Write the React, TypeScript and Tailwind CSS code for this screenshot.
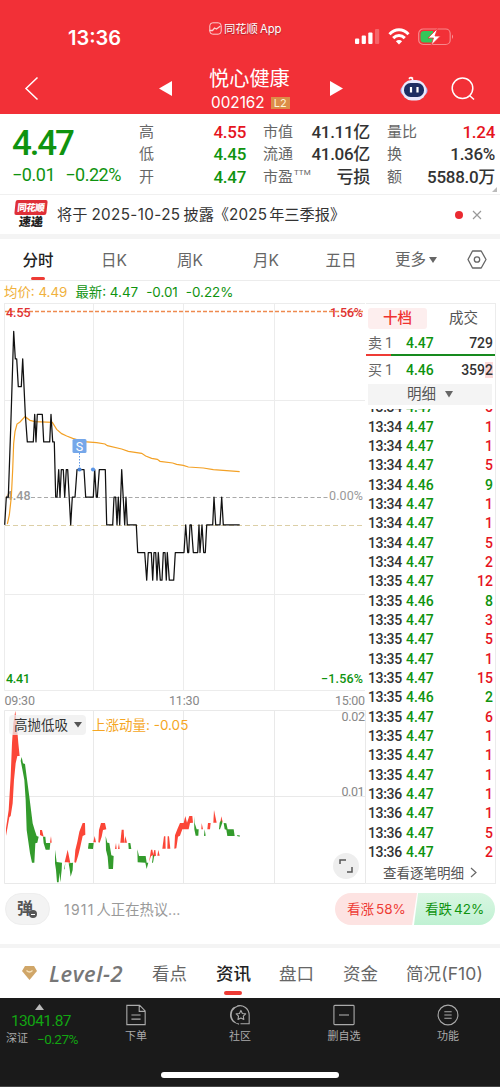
import React from "react";

const num = "font-['Roboto','Noto_Sans_CJK_SC',sans-serif]";
const inter = "font-['Inter','Noto_Sans_CJK_SC',sans-serif]";

/* ---------- price series: [x, price in cents above 4.00] ---------- */
const price: [number, number][] = [
  [14, 47], [19, 48], [25, 48], [32, 50.5], [36, 52], [41, 54], [46, 53], [50, 53], [55, 52], [64, 52], [68, 53], [76, 51], [82, 50],
  [100, 50], [104, 51], [108, 50], [112, 51], [127, 51], [131, 50], [149, 50], [153, 51], [158, 50], [163, 50], [167, 48],
  [171, 48], [176, 49], [180, 48], [184, 49], [190, 49], [194, 48], [199, 49], [203, 49], [212, 47], [217, 48], [225, 48],
  [231, 49], [252, 49], [257, 48], [280, 48], [284, 49], [289, 48], [292, 48], [298, 49], [316, 49], [320, 47], [338, 47],
  [342, 48], [347, 48], [351, 47], [355, 48], [359, 47], [365, 49], [374, 47], [378, 48], [382, 47], [409, 47], [413, 46],
  [434, 46], [440, 45], [445, 46], [454, 46], [458, 45], [462, 46], [467, 46], [471, 45], [475, 46], [481, 45], [486, 45],
  [490, 46], [495, 46], [499, 45], [502, 46], [508, 45], [521, 45], [526, 46], [552, 46], [557, 47], [563, 46], [566, 46],
  [570, 47], [574, 47], [580, 46], [593, 46], [597, 47], [600, 46], [606, 47], [611, 46], [616, 46], [620, 47], [638, 47],
  [642, 48], [647, 47], [660, 47], [665, 48], [670, 47], [719, 47],
];
const pricePoints = price.map(([x, p]) => `${(x / 3).toFixed(1)},${(497.2 - (p - 48) * 27.65).toFixed(1)}`).join(" ");

const average =
  "22,672 28,645 34,590 38,510 41,430 45,395 51,372 60,366 75,350 90,361 105,365 157,367 170,388 185,401 200,408 218,415 250,425 290,428 315,432 322,437 365,447 385,454 425,460 437,468 455,475 472,478 480,484 518,489 530,493 550,496 565,501 610,504 640,509 719,515";

/* ---------- momentum bands ---------- */
const red = [
  "18,408 18,385 26,330 32,230 36,130 40,70 46,32 51,80 55,130 59,168 52,168 47,190 42,240 38,310 32,348 28,352",
  "120,390 126,390 131,410 120,405", "150,428 153,408 155,428",
  "194,487 203,449 211,489 202,487",
  "223,487 226,450 232,425 238,395 248,369 255,369 256,404 248,408 240,445 235,465 228,488",
  "280,427 284,408 288,427",
  "295,427 297,390 303,369 315,369 319,388 309,390 305,410 299,428",
  "345,447 348,429 350,447", "354,447 357,429 359,447", "361,428 365,389 371,389 373,428", "373,428 376,408 381,428",
  "447,487 453,449 457,449 460,466 453,468", "458,470 463,450 466,450 468,467", "472,467 475,450 479,467",
  "487,446 492,409 496,409 497,446", "502,446 503,409 507,409 511,446",
  "523,446 525,406 532,388 540,369 551,369 556,348 561,368 568,348 577,348 579,368 570,369 566,388 547,388 540,407 534,410 529,445",
  "604,388 605,369 609,388", "622,388 624,369 632,369 630,388", "640,368 642,330 650,368", "661,368 664,349 668,366",
];
const green = [
  "62,182 65,171 69,190 75,192 80,230 88,290 98,370 104,390 110,408 116,410 112,428 106,430 103,488 96,488 90,460 80,390 77,300 73,240 67,208",
  "129,410 136,410 138,429 151,429 149,449 137,449 131,430",
  "165,449 170,486 186,488 185,510 181,547 178,518 176,547 171,547 168,510 165,490",
  "192,508 196,488 194,508", "206,490 219,488 218,510 212,530 209,508",
  "264,446 266,429 281,429 279,447",
  "317,408 322,428 328,429 334,466 341,468 339,507 326,507 323,470 318,450",
  "385,429 391,429 394,447 386,447",
  "412,448 417,468 437,468 440,488 445,488 440,507 436,488 413,487", "456,488 459,465 463,466 459,488",
  "582,349 584,369 590,388 596,388 595,407 587,407 583,388", "612,408 614,388 617,407",
  "657,388 659,368 664,360 667,368 660,388", "671,369 679,370 683,388 701,388 704,408 682,408 679,389 674,388",
  "711,406 719,406 719,410 711,408",
];

function PriceChart() {
  return (
    <svg className="block" width="362" height="406" viewBox="4 303 362 406" fontFamily="Roboto, sans-serif" fontWeight="500">
      <g stroke="#ececec" fill="none">
        <path d="M4.5 303V690.5H365M4.5 303.5H365M4 400.5H365M4 594.5H365M93.500 303V690M183.500 303V690M274.500 303V690" />
      </g>
      <path d="M5 311.600H363" stroke="#ee8a4f" strokeWidth="1.500" strokeDasharray="4 2" />
      <path d="M31 497.500H330" stroke="#a9a9a9" strokeDasharray="4 2.500" />
      <path d="M5 525.500H365" stroke="#dccfa6" strokeDasharray="5 3" />
      <text x="5.500" y="500" fontSize="12.500" fill="#999" textLength="25">4.48</text>
      <polyline transform="translate(0 300) scale(.33333)" points={average} fill="none" stroke="#f3a126" strokeWidth="3.600" />
      <polyline points={pricePoints} fill="none" stroke="#111" strokeWidth="1.250" strokeLinejoin="round" />
      <path d="M79.500 453V469" stroke="#5f9bea" strokeDasharray="1.500 1.500" />
      <circle cx="79.500" cy="469.500" r="2.100" fill="#4d86d6" />
      <circle cx="93" cy="469.500" r="2.100" fill="#5c96e6" />
      <rect x="72.500" y="439" width="14" height="14" rx="1.500" fill="#75a7e9" />
      <text x="79.500" y="450.500" fontSize="12.500" fontWeight="400" fill="#fff" textAnchor="middle">S</text>
      <g fontSize="12.500">
        <text x="6" y="316.500" fill="#e03232" textLength="24.500">4.55</text>
        <text x="330" y="316.500" fill="#e03232" textLength="33">1.56%</text>
        <text x="329" y="499.500" fill="#999" fontWeight="400" textLength="34">0.00%</text>
        <text x="6" y="683.300" fill="#0f930f" textLength="24">4.41</text>
        <text x="321" y="683.300" fill="#0f930f" textLength="42">−1.56%</text>
      </g>
      <g fontSize="12.500" fontWeight="400" fill="#888">
        <text x="4.500" y="705" textLength="30.500">09:30</text>
        <text x="169" y="705" textLength="30.500">11:30</text>
        <text x="335" y="705" textLength="30">15:00</text>
      </g>
    </svg>
  );
}

function MomentumChart() {
  return (
    <div className="relative h-[175px]">
      <svg className="block" width="362" height="175" viewBox="4 709 362 175" fontFamily="Roboto, sans-serif">
        <path d="M4.500 710.500H365.500V883.500H4.500ZM4 796.500H365M93.500 710V883M183.500 710V883M274.500 710V883" fill="none" stroke="#e9e9e9" />
        <g transform="translate(0 700) scale(.33333)">
          {red.map((p) => <polygon key={p} points={p} fill="#fb4637" />)}
          {green.map((p) => <polygon key={p} points={p} fill="#339b2c" />)}
        </g>
        <g fontSize="12.500" fill="#888">
          <text x="341.500" y="721" textLength="23.500">0.02</text>
          <text x="341.500" y="796" textLength="23">0.01</text>
        </g>
      </svg>
      <div className="absolute left-[5px] top-[6px] flex h-[20px] items-center">
        <div className={`flex h-[20px] w-[77px] items-center justify-between rounded-sm bg-[#eeeeee]/75 pl-[5px] pr-[4px] text-[13.500px] leading-[20px] text-[#333] whitespace-nowrap ${inter}`}>
          高抛低吸
          <svg width="8" height="6" viewBox="0 0 8 6"><path d="M0 0h8L4 5.500z" fill="#555" /></svg>
        </div>
        <span className={`ml-[6px] text-[13.500px] leading-[20px] tracking-[0px] text-[#f5a623] whitespace-nowrap ${inter}`}>上涨动量: -0.05</span>
      </div>
      <div className="absolute left-[329px] top-[144px] flex size-[26px] items-center justify-center rounded-full bg-[#eeeeee]">
        <svg width="16" height="16" viewBox="0 0 16 16" fill="none" stroke="#555" strokeWidth="1.500"><path d="M2 6V2h6M9 14h5V9" /></svg>
      </div>
    </div>
  );
}

const trades: [string, string, number][] = [
  ["13:34", "4.47", 5], ["13:34", "4.47", 1], ["13:34", "4.47", 1], ["13:34", "4.47", 5], ["13:34", "4.46", 9], ["13:34", "4.47", 1],
  ["13:34", "4.47", 1], ["13:34", "4.47", 5], ["13:34", "4.47", 2], ["13:35", "4.47", 12], ["13:35", "4.46", 8], ["13:35", "4.47", 3],
  ["13:35", "4.47", 5], ["13:35", "4.47", 1], ["13:35", "4.47", 15], ["13:35", "4.46", 2], ["13:35", "4.47", 6], ["13:35", "4.47", 1],
  ["13:35", "4.47", 1], ["13:35", "4.47", 1], ["13:36", "4.47", 1], ["13:36", "4.47", 1], ["13:36", "4.47", 5], ["13:36", "4.47", 2],
];

function OrderPanel() {
  return (
    <div className={`flex w-[130px] flex-col border-b border-r border-t border-[#ececec] ${num}`}>
      <div className="flex h-[27px] pl-[2px] pt-[4px] text-[14.500px] leading-[22px]">
        <div className="h-[21px] w-[59px] rounded-[3px] bg-[#fdeeee] text-center font-medium text-[#f0322f]">十档</div>
        <div className="ml-[22px] text-[#555]">成交</div>
      </div>
      <div className="flex h-[23px] items-center text-[14px] leading-[20px]">
        <span className="w-[38px] pl-[2px] text-[#666]">卖<span className="ml-[3px]">1</span></span>
        <span className="flex-1 pl-[2px] font-medium text-[#0f930f]">4.47</span>
        <span className="pr-[2px] font-medium text-[#333]">729</span>
      </div>
      <div className="flex h-[2px]"><div className="w-[25px] bg-[#ee3b35]" /><div className="flex-1 bg-[#168a1e]" /></div>
      <div className="flex h-[28px] items-center text-[14px] leading-[20px]">
        <span className="w-[38px] pl-[2px] text-[#666]">买<span className="ml-[3px]">1</span></span>
        <span className="flex-1 pl-[2px] font-medium text-[#0f930f]">4.46</span>
        <span className="pr-[2px] font-medium text-[#333]">359<span className="bg-[#fbd9d9]">2</span></span>
      </div>
      <div className="ml-[2px] mr-[3px] flex h-[21px] items-center justify-center gap-[9px] bg-[#f4f4f4] text-[14.500px] leading-[21px] text-[#555]">
        明细<svg width="8" height="7" viewBox="0 0 8 7"><path d="M0 0h8L4 6.500z" fill="#666" /></svg>
      </div>
      <div className="mt-[4px] flex h-[453px] flex-col justify-end overflow-hidden text-[14px] font-medium">
        {trades.map(([t, p, v], i) => (
          <div key={i} className="flex h-[19.340px] shrink-0 items-center leading-[19px]">
            <span className="w-[40px] pl-[2px] tracking-[-0.350px] text-[#333]">{t}</span>
            <span className="flex-1 text-[#0f930f]">{p}</span>
            <span className={p === "4.46" ? "pr-[2px] text-[#0f930f]" : "pr-[2px] text-[#e6141e]"}>{v}</span>
          </div>
        ))}
      </div>
      <div className="flex h-[21px] items-center pl-[17px] text-[13.500px] leading-[20px] text-[#555] whitespace-nowrap">
        查看逐笔明细
        <svg className="ml-[6px]" width="7" height="11" viewBox="0 0 7 11" fill="none" stroke="#666" strokeWidth="1.200"><path d="M1 1l5 4.500L1 10" /></svg>
      </div>
    </div>
  );
}

function Header() {
  return (
    <header className={`h-[114px] bg-[#f23037] text-white ${inter}`}>
      <div className="flex h-[64px]">
        <div className="w-[209px] pl-[68px] pt-[27px] text-[20px] font-semibold leading-[23px] tracking-[0px]">13:36</div>
        <svg className="mt-[22px]" width="13" height="13" viewBox="0 0 13 13" fill="none" stroke="#fbd0d2" strokeWidth="1"><rect x="0.800" y="0.800" width="11.400" height="11.400" rx="3" /><path d="M0.500 8.500h3l2-2.500 2 1 4-3" strokeWidth="1.300" /></svg>
        <div className="ml-[2px] w-[131px] pt-[21px] text-[11.300px] leading-[17px] [text-shadow:0_1px_1px_#a0222a]">同花顺<span className="ml-[2px]">App</span></div>
        <svg className="mt-[28px]" width="25" height="17" viewBox="355 28 25 17" fill="#fff"><rect x="355" y="38.500" width="4.200" height="5.500" rx="1" /><rect x="361.700" y="35.500" width="4.200" height="8.500" rx="1" /><rect x="368.300" y="32.500" width="4.200" height="11.500" rx="1" /><rect x="375" y="29" width="4.200" height="15" rx="1" opacity=".25" /></svg>
        <svg className="ml-[8px] mt-[28px]" width="22" height="17" viewBox="0 0 22 17" fill="none" stroke="#fff" strokeWidth="3"><path d="M1.500 6.200C7 .4 15 .4 20.500 6.200" /><path d="M5.200 10.100c3.500-3.500 8.100-3.500 11.600 0" /><path d="M11 16.500L7.900 13.200c1.800-1.700 4.400-1.700 6.200 0z" fill="#fff" stroke="none" /></svg>
        <svg className="ml-[8px] mt-[28px]" width="37" height="18" viewBox="0 0 37 18"><rect x=".7" y="1" width="31.500" height="15.500" rx="4.500" fill="none" stroke="#fff" strokeOpacity=".42" strokeWidth="1.200" /><path d="M6 3h9v11.500H6a3.500 3.500 0 0 1-3.500-3.500V6.500A3.500 3.500 0 0 1 6 3z" fill="#34c759" /><path d="M34 6.500q2 2.200 0 4.500z" fill="#fff" opacity=".5" /><path d="M19.500.5L10 10h5.500L13 17.500 22.500 8H17z" fill="#fff" stroke="#f23037" strokeWidth=".8" /></svg>
      </div>
      <div className="flex h-[50px]">
        <svg className="ml-[24px] mt-[12px]" width="15" height="25" viewBox="0 0 15 25" fill="none" stroke="#fff" strokeWidth="1.500"><path d="M13.500 1.500L2 12.500l11.500 11" /></svg>
        <svg className="ml-[120px] mt-[17px]" width="13" height="15" viewBox="0 0 13 15"><path d="M13 0v15L0 7.500z" fill="#fff" /></svg>
        <div className="ml-[37px] w-[121px] whitespace-nowrap">
          <div className="h-[27px] pt-[1px] text-[20.200px] leading-[27px]">悦心健康</div>
          <div className="flex h-[23px] items-center pl-[2px] text-[15.300px] leading-[20px]">002162<span className="ml-[6px] flex h-[12px] w-[19px] items-center justify-center bg-[#dc8d48] text-[11px] leading-[12px] text-[#fff3d6]">L2</span></div>
        </div>
        <svg className="mt-[17px]" width="13" height="15" viewBox="0 0 13 15"><path d="M0 0v15l13-7.500z" fill="#fff" /></svg>
        <svg className="ml-[57px] mt-[11px]" width="28" height="27" viewBox="0 0 28 27">
          <path d="M9 4q3-3 4 2M9 3.500q2-2 4 0" stroke="#fff" strokeWidth="1.500" fill="none" />
          <rect x=".5" y="10.500" width="27" height="10" rx="5" fill="#b5b4f2" />
          <rect x="1.700" y="5" width="24.600" height="20.500" rx="10" fill="#e9e9fd" />
          <rect x="4" y="8" width="20" height="14" rx="6.500" fill="#1e2d62" />
          <path d="M11 12v5.500M17.500 12v5.500" stroke="#fff" strokeWidth="2.200" />
        </svg>
        <svg className="ml-[22px] mt-[12px]" width="26" height="25" viewBox="0 0 26 25" fill="none" stroke="#fff" strokeWidth="1.500"><circle cx="12.500" cy="12.300" r="10.300" /><path d="M19.500 19.500l4.500 4" /></svg>
      </div>
    </header>
  );
}

function Stat({ label, value, color, sup }: { label: string; value: string; color: string; sup?: boolean }) {
  return (
    <div className="flex h-[22.500px] items-center justify-between whitespace-nowrap leading-[22px]">
      <span className="text-[15px] text-[#666]">{label}{sup && <sup className="-top-[7px] ml-[1px] text-[8px] leading-[0]">TTM</sup>}</span>
      <span className={`text-[17px] font-medium tracking-[-0.300px] ${color}`}>{value}</span>
    </div>
  );
}

function Quote() {
  return (
    <section className={`flex h-[80px] pt-[6.500px] ${num}`}>
      <div className="w-[139px] pl-[12px] text-[#0f930f] whitespace-nowrap">
        <div className="h-[43.500px] text-[35px] font-medium leading-[45px] tracking-[-2.200px]">4.47</div>
        <div className="flex gap-[10px] text-[18px] leading-[21px] tracking-[-0.450px]"><span>−0.01</span><span>−0.22%</span></div>
      </div>
      <div className="w-[107px]">
        <Stat label="高" value="4.55" color="text-[#e6141e]" />
        <Stat label="低" value="4.45" color="text-[#0f930f]" />
        <Stat label="开" value="4.47" color="text-[#0f930f]" />
      </div>
      <div className="ml-[17px] w-[107px]">
        <Stat label="市值" value="41.11亿" color="text-[#333]" />
        <Stat label="流通" value="41.06亿" color="text-[#333]" />
        <Stat label="市盈" value="亏损" color="text-[#333]" sup />
      </div>
      <div className="ml-[17px] w-[108px]">
        <Stat label="量比" value="1.24" color="text-[#e6141e]" />
        <Stat label="换" value="1.36%" color="text-[#333]" />
        <Stat label="额" value="5588.0万" color="text-[#333]" />
      </div>
      <svg className="-ml-[3px] mt-[66px]" width="5" height="5" viewBox="0 0 5 5"><path d="M5 0v5H0z" fill="#bbb" /></svg>
    </section>
  );
}

function News() {
  return (
    <section className={`flex h-[40px] items-center border-t border-[#f0f0f0] ${inter}`}>
      <div className="ml-[14px] flex h-[29px] w-[34px] flex-col items-center whitespace-nowrap">
        <div className="flex h-[15px] w-[32px] -skew-x-6 items-center justify-center rounded-[2px] bg-[#df3038] text-[9.500px] font-black leading-[14px] tracking-[-0.500px] text-white">同花顺</div>
        <div className="h-[14px] -skew-x-6 text-[12px] font-black leading-[14px] text-[#222]">速递</div>
      </div>
      <div className="ml-[9px] text-[15.200px] leading-[22px] text-[#333] whitespace-nowrap">将于<span className="ml-[4px] mr-[3px] tracking-[0.400px]">2025-10-25</span>披露《<span className="tracking-[0.200px]">2025</span><span className="ml-[2px]">年三季报》</span></div>
      <div className="ml-auto size-[8px] rounded-full bg-[#ea2a31]" />
      <svg className="ml-[9px] mr-[18px]" width="10" height="10" viewBox="0 0 10 10" stroke="#999" strokeWidth="1.200"><path d="M1 1l8 8M9 1L1 9" /></svg>
    </section>
  );
}

function Periods() {
  return (
    <nav className={`flex h-[42px] border-b border-[#ececec] text-[15.500px] leading-[43px] text-[#666] whitespace-nowrap ${inter}`}>
      <div className="flex w-[76px] flex-col items-center font-medium text-[#222]"><span className="h-[38px]">分时</span><span className="h-[3px] w-[14px] rounded-full bg-[#ee3b35]" /></div>
      <div className="w-[76px] text-center">日K</div>
      <div className="w-[76px] text-center">周K</div>
      <div className="w-[76px] text-center">月K</div>
      <div className="w-[74px] text-center">五日</div>
      <div className="ml-[17px] flex w-[72px] items-center">更多<svg className="ml-[3px]" width="8" height="6" viewBox="0 0 8 6"><path d="M0 0h8L4 6z" fill="#666" /></svg></div>
      <svg className="mt-[11px]" width="20" height="19" viewBox="0 0 20 19" fill="none" stroke="#666" strokeWidth="1.300"><path d="M5.500 1h8.700L19 9.500 14.200 18H5.500L1 9.500z" strokeLinejoin="round" /><circle cx="10" cy="9.500" r="2.700" /></svg>
    </nav>
  );
}

function Discussion() {
  return (
    <section className={`flex h-[60px] pl-[5px] pr-[5px] pt-[9px] text-[14px] leading-[33px] whitespace-nowrap ${inter}`}>
      <div className="relative h-[32px] w-[45px] rounded-full border border-[#eeeeee] bg-[#f3f3f3] pl-[11px] text-[16px] font-bold leading-[29px] text-[#555]">
        弹
        <div className="absolute left-[23px] top-[16px] flex size-[8px] items-center justify-center rounded-full bg-[#555]"><span className="h-px w-[4px] bg-white" /></div>
      </div>
      <div className="ml-[14px] text-[#999]"><span className="tracking-[1.200px]">1911</span><span className="ml-[2px] text-[14.300px]">人正在热议...</span></div>
      <div className="ml-auto h-[32px] w-[82px] rounded-l-full bg-[#fde3e2] pl-[12px] text-[13.500px] text-[#ee3b35] [clip-path:polygon(0_0,100%_0,94%_100%,0_100%)]">看涨<span className="ml-[2px]">58%</span></div>
      <div className="-ml-[3px] h-[32px] w-[81px] rounded-r-full bg-gradient-to-b from-[#d9f6e2] to-[#c0f1d3] pl-[11px] text-[13.500px] text-[#0f930f] [clip-path:polygon(5%_0,100%_0,100%_100%,0_100%)]">看跌<span className="ml-[2px]">42%</span></div>
    </section>
  );
}

function InfoTabs() {
  return (
    <nav className={`flex h-[50px] text-[17.500px] leading-[51px] text-[#666] whitespace-nowrap ${inter}`}>
      <svg className="ml-[22px] mt-[18px]" width="15" height="14" viewBox="0 0 15 14"><path d="M3 0h9l3 5-7.500 9L0 5z" fill="#d0a668" /><path d="M4.500 4.500q3 3 6 0" fill="none" stroke="#f7e3bd" strokeWidth="1.200" /></svg>
      <div className="ml-[12px] w-[103px] font-['Open_Sans',sans-serif] text-[22px] font-semibold italic tracking-[0.600px] text-[#777]">Level-2</div>
      <div className="w-[64px]">看点</div>
      <div className="flex w-[63px] flex-col font-medium text-[#222]"><span className="h-[43px]">资讯</span><span className="ml-[8px] h-[4px] w-[18px] rounded-full bg-[#ee3b35]" /></div>
      <div className="w-[64px]">盘口</div>
      <div className="w-[63px]">资金</div>
      <div className="tracking-[0.100px]">简况(F10)</div>
    </nav>
  );
}

function BarItem({ label, children }: { label: string; children: React.ReactNode }) {
  return (
    <div className="flex w-[104px] flex-col items-center pt-[6px]">
      <svg width="22" height="22" viewBox="0 0 24 24" fill="none" stroke="#aaa" strokeWidth="1.200">{children}</svg>
      <span className="mt-[3px] text-[11px] leading-[16px] text-[#aaa]">{label}</span>
    </div>
  );
}

function BottomBar() {
  return (
    <footer className={`flex h-[89px] flex-col border-b border-[#444] bg-[#1a1a1a] ${num}`}>
      <div className="flex h-[74px]">
        <div className="flex w-[84px] flex-col pt-[6px] text-[#12a512]">
          <svg className="ml-[35px]" width="9" height="6" viewBox="0 0 9 6"><path d="M4.500 0L9 6H0z" fill="#bbb" /></svg>
          <div className="pl-[11px] pt-[2px] text-[15.500px] leading-[19px] tracking-[-0.650px]">13041.87</div>
          <div className="flex pl-[6px] text-[13.500px] leading-[16px] tracking-[-0.500px]"><span className="w-[31px] text-[11px] tracking-normal text-[#aaa]">深证</span>−0.27%</div>
        </div>
        <BarItem label="下单"><path d="M2 1.500h14l6 6v15H2zM15.500 1.500V8H22M7 12h10M7 16.500h10" /></BarItem>
        <BarItem label="社区"><path d="M6 3.500a10 10 0 0 0 0 16.500M9 2a10.500 10.500 0 0 1 13 10v9.500h-9.500M11 22A10 10 0 1 1 14 2" /><path d="M13 7l1.600 3.300 3.600.5-2.600 2.500.6 3.600L13 15.200l-3.200 1.700.6-3.600-2.600-2.500 3.600-.5z" strokeLinejoin="round" /></BarItem>
        <BarItem label="删自选"><rect x="1" y="1.500" width="22" height="21" rx="1" /><path d="M6.500 12h11" /></BarItem>
        <BarItem label="功能"><circle cx="12" cy="12" r="10.800" /><path d="M8 8.500h8M8 12h8M8 15.500h8" /></BarItem>
      </div>
      <div className="mx-auto h-[6px] w-[178px] rounded-full bg-white" />
    </footer>
  );
}

export default function App() {
  return (
    <main lang="zh-CN" className="flex h-[1087px] w-[500px] flex-col overflow-hidden bg-white">
      <Header />
      <Quote />
      <News />
      <div className="h-[5px] bg-[#f4f4f4]" />
      <Periods />
      <div className={`flex h-[22px] items-center pl-[4px] text-[13.400px] leading-[24px] whitespace-nowrap ${inter}`}>
        <span className="text-[#f0b13c]">均价: 4.49</span>
        <span className="ml-[8px] text-[#0f930f]">最新: 4.47</span>
        <span className="ml-[8px] text-[#0f930f]">-0.01</span>
        <span className="ml-[8px] text-[#0f930f]">-0.22%</span>
      </div>
      <div className="flex h-[581px] pl-[4px]">
        <div className="w-[362px]">
          <PriceChart />
          <MomentumChart />
        </div>
        <OrderPanel />
      </div>
      <Discussion />
      <div className="h-[4px] bg-[#f4f4f4]" />
      <InfoTabs />
      <BottomBar />
    </main>
  );
}
